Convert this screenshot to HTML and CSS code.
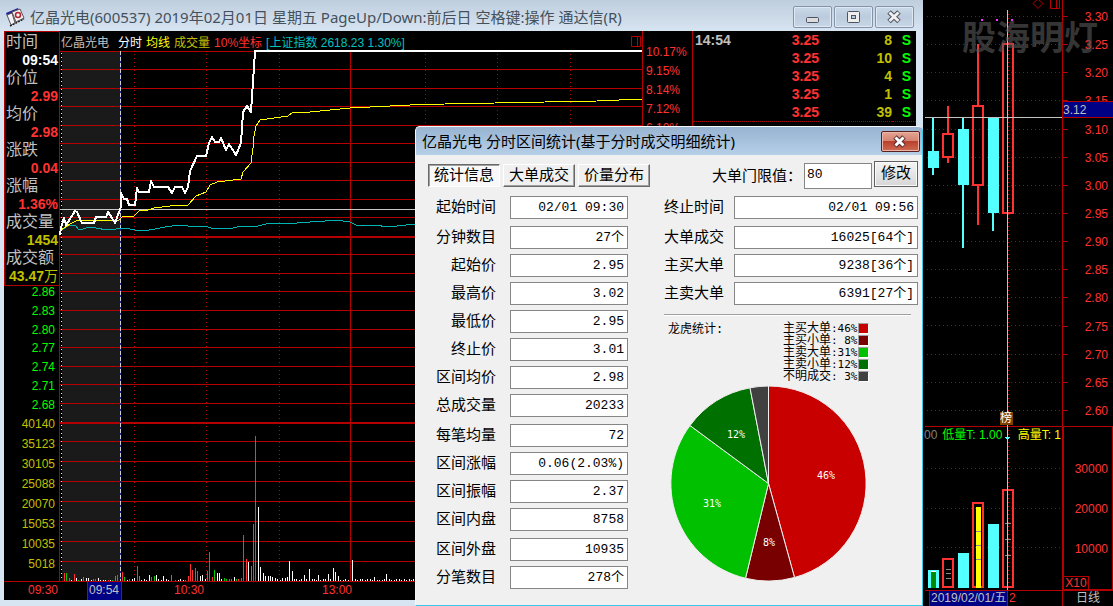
FILE: index.html
```html
<!DOCTYPE html>
<html lang="zh-CN">
<head>
<meta charset="utf-8">
<title>亿晶光电(600537)</title>
<link rel="stylesheet" href="styles.css">
</head>
<body>
<div class="desktop">
  <main class="window">
    <header class="window-title">
      <svg class="app-icon" width="20" height="20" viewBox="0 0 20 20">
        <path d="M1 6L13 1L14 4L2 9Z" fill="#20209a"/>
        <path d="M2 8L7 6L10 16L6 18Z" fill="#f4f4f8" stroke="#555" stroke-width="1"/>
        <path d="M7 5L15 2L19 11L11 15Z" fill="#f8f4f4" stroke="#555" stroke-width="1"/>
        <circle cx="13" cy="8" r="2.5" fill="none" stroke="#b02838" stroke-width="1.6"/>
        <path d="M5 19L11 16L19 12" stroke="#222" stroke-width="1.4" stroke-dasharray="2 1" fill="none"/>
      </svg>
      <h1>亿晶光电(600537) 2019年02月01日 星期五 PageUp/Down:前后日 空格键:操作 通达信(R)</h1>
      <div class="window-buttons">
        <button type="button" aria-label="最小化"><svg width="38" height="21" viewBox="0 0 38 21"><rect x="13.500" y="11.500" width="12" height="5" rx="1" fill="#dcdcdc" stroke="#4d5360"/></svg></button>
        <button type="button" aria-label="最大化"><svg width="38" height="21" viewBox="0 0 38 21"><rect x="13.500" y="5.500" width="12" height="11" rx="1" fill="#eee" stroke="#4d5360"/><rect x="17.500" y="9.500" width="4" height="3" fill="#b9cbe0" stroke="#4d5360"/></svg></button>
        <button type="button" aria-label="关闭"><svg width="38" height="21" viewBox="0 0 38 21"><path d="M14 6L24 15.500M24 6L14 15.500" stroke="#4d5360" stroke-width="5"/><path d="M14.500 6.500L23.500 15M23.500 6.500L14.500 15" stroke="#f0f0f0" stroke-width="3"/></svg></button>
      </div>
    </header>

    <div class="workspace">
      <section class="readings">
        <dl class="quote">
          <dt>时间</dt><dd class="white">09:54</dd>
          <dt>价位</dt><dd class="red">2.99</dd>
          <dt>均价</dt><dd class="red">2.98</dd>
          <dt>涨跌</dt><dd class="red">0.04</dd>
          <dt>涨幅</dt><dd class="red">1.36%</dd>
          <dt>成交量</dt><dd class="olive">1454</dd>
          <dt>成交额</dt><dd class="olive">43.47<span class="unit">万</span></dd>
        </dl>
        <div class="price-scale">
          <span>2.86</span><span>2.83</span><span>2.80</span><span>2.77</span><span>2.74</span><span>2.71</span><span>2.68</span>
        </div>
        <div class="volume-scale">
          <span>40140</span><span>35123</span><span>30105</span><span>25088</span><span>20070</span><span>15053</span><span>10035</span><span>5018</span>
        </div>
      </section>

      <section class="intraday">
        <div class="legend-row">
          <span class="gray wide">亿晶光电</span><span class="white">分时</span><span class="yellow">均线</span><span class="olive">成交量</span><span class="red">10%坐标</span><span class="teal">[上证指数 2618.23 1.30%]</span>
          <svg class="split-icon" width="10" height="11" viewBox="0 0 10 11"><path d="M.5.5H9.500V10.500H.5ZM6.500.5V10.500" fill="none" stroke="#b40000"/></svg>
        </div>
        <svg class="chart" viewBox="60 51 582 530" preserveAspectRatio="none" shape-rendering="crispEdges" fill="none">
          <rect x="62" y="51" width="58" height="530" fill="#1a1a1a"/>
          <g stroke="#b40000">
            <path d="M60 69.500H642M60 88.500H642M60 106.500H642M60 125.500H642M60 143.500H642M60 162.500H642M60 180.500H642M60 199.500H642M60 217.500H642M60 254.500H642M60 273.500H642M60 291.500H642M60 310.500H642M60 329.500H642M60 347.500H642M60 366.500H642M60 384.500H642M60 403.500H642M60 441.500H642M60 461.500H642M60 481.500H642M60 501.500H642M60 521.500H642M60 541.500H642M60 561.500H642M60 51.500H255M350.500 51V581"/>
            <path d="M60 237H642M60 423H642" stroke-width="2"/>
            <path d="M134.500 54V581M206.500 54V581M279.500 54V581M425.500 54V581M497.500 54V581M570.500 54V581" stroke-dasharray="1 3"/>
          </g>
          <path d="M61.500 53V581" stroke="#ffff40" stroke-dasharray="1 3"/>
          <path d="M120.500 51V581" stroke="#2a2a90"/>
          <path d="M120.500 51V581" stroke="#d0d0d0" stroke-dasharray="4 2"/>
          <path d="M60 209.500H642" stroke="#c8c8c8"/>
          <path class="bars-red" d="M64.500 581v-8M69.500 581v-3M74.500 581v-7M95.500 581v-2M108.500 581v-1M117.500 581v-6M122.500 581v-9M137.500 581v-15M151.500 581v-4M175.500 581v-1M188.500 581v-5M190.500 581v-17M192.500 581v-11M195.500 581v-13M197.500 581v-10M207.500 581v-10M209.500 581v-29M212.500 581v-4M229.500 581v-2M238.500 581v-2M241.500 581v-3M243.500 581v-46M246.500 581v-22M253.500 581v-57M255.500 581V436"/>
          <path class="bars-green" d="M66.500 581v-8M78.500 581v-1M83.500 581v-4M93.500 581v-2M112.500 581v-1M115.500 581v-5M124.500 581v-4M129.500 581v-2M139.500 581v-5M154.500 581v-5M171.500 581v-6M185.500 581v-1M214.500 581v-11M224.500 581v-3M226.500 581v-2M231.500 581v-2M236.500 581v-2M251.500 581v-15"/>
          <path class="bars-white" d="M71.500 581v-1M76.500 581v-3M81.500 581v-2M86.500 581v-3M88.500 581v-3M91.500 581v-1M98.500 581v-3M100.500 581v-1M103.500 581v-1M105.500 581v-1M110.500 581v-1M127.500 581v-1M132.500 581v-2M134.500 581v-3M141.500 581v-1M144.500 581v-2M146.500 581v-1M149.500 581v-6M156.500 581v-6M158.500 581v-2M161.500 581v-1M163.500 581v-5M166.500 581v-2M168.500 581v-1M178.500 581v-1M180.500 581v-2M183.500 581v-1M200.500 581v-5M202.500 581v-6M205.500 581v-2M217.500 581v-8M219.500 581v-8M221.500 581v-2M234.500 581v-4M248.500 581v-19M258.500 581v-74M260.500 581v-14M263.500 581v-8M265.500 581v-5M268.500 581v-5M270.500 581v-5M272.500 581v-4M275.500 581v-3M277.500 581v-2M280.500 581v-1M282.500 581v-3M285.500 581v-3M287.500 581v-4M289.500 581v-20M292.500 581v-10M294.500 581v-2M296.500 581v-2M299.500 581v-1M301.500 581v-2M304.500 581v-6M306.500 581v-2M309.500 581v-12M312.500 581v-2M314.500 581v-2M316.500 581v-1M318.500 581v-6M320.500 581v-1M323.500 581v-2M325.500 581v-2M328.500 581v-7M330.500 581v-2M333.500 581v-13M335.500 581v-9M338.500 581v-5M340.500 581v-1M343.500 581v-1M345.500 581v-2M348.500 581v-1M352.500 581v-21M355.500 581v-2M357.500 581v-1M360.500 581v-2M362.500 581v-2M365.500 581v-1M367.500 581v-2M370.500 581v-2M372.500 581v-1M374.500 581v-4M377.500 581v-1M379.500 581v-1M382.500 581v-1M384.500 581v-2M386.500 581v-7M389.500 581v-2M391.500 581v-1M394.500 581v-1M396.500 581v-2M399.500 581v-2M401.500 581v-1M404.500 581v-2M406.500 581v-1M409.500 581v-2M411.500 581v-1M413.500 581v-2"/>
          <path d="M61 230L70 225H75L79 230L90 227L96 228L107 230L125 228L135 230L144 231L155 229L165 227L180 225L195 227L206 226L213 229L233 228L237 227L258 226L270 223L285 224L310 222L325 221L335 220L350 222L356 225L375 225L388 227L415 224" stroke="#00b4b4"/>
          <path d="M61 230L70 224L76 221L119 220L122 217L134 216L139 211L148 210L154 208L170 206L188 205L196 196L206 192L210 185L217 182L241 179L243 172L251 163L253 148L254 136L256 126L260 120L288 116L292 113L310 112L350 108L410 105L445 104L545 102L597 101L642 99" stroke="#ffff00"/>
          <path d="M60 235L61 228L64 218L66 225L70 219L75 211L77 212L82 223H94L96 217H106L108 212L112 218L115 223L119 212L121 207V193L124 199H127L129 205H135L137 188L139 192H149L151 181L154 187H168L172 193L175 187H182L185 193L188 187L190 171L197 156H206L209 143L212 137L215 142H219L221 138L226 150L229 144L236 155L241 143L243 112L247 106L251 112L253 82L255 51H642" stroke="#fff" stroke-width="2" stroke-linejoin="round"/>
        </svg>
      </section>

      <section class="percent-scale">
        <span>10.17%</span><span>9.15%</span><span>8.14%</span><span>7.12%</span><span>6.10%</span>
      </section>

      <section class="trades">
        <table>
          <tr><td class="time">14:54</td><td class="price">3.25</td><td class="lots">8</td><td class="side">S</td></tr>
          <tr><td class="time"></td><td class="price">3.25</td><td class="lots">10</td><td class="side">S</td></tr>
          <tr><td class="time"></td><td class="price">3.25</td><td class="lots">4</td><td class="side">S</td></tr>
          <tr><td class="time"></td><td class="price">3.25</td><td class="lots">1</td><td class="side">S</td></tr>
          <tr><td class="time"></td><td class="price">3.25</td><td class="lots">39</td><td class="side">S</td></tr>
        </table>
      </section>

      <footer class="time-axis">
        <span class="tick-open">09:30</span><span class="tick-cursor">09:54</span><span class="tick-mid">10:30</span><span class="tick-noon">13:00</span>
      </footer>
    </div>
  </main>

  <aside class="daily">
    <svg class="daily-chart" viewBox="925 0 137 590" preserveAspectRatio="none" shape-rendering="crispEdges" fill="none">
      <path d="M927 16.500H1062M927 44.500H1062M927 72.500H1062M927 100.500H1062M927 129.500H1062M927 157.500H1062M927 185.500H1062M927 213.500H1062M927 241.500H1062M927 269.500H1062M927 297.500H1062M927 325.500H1062M927 354.500H1062M927 382.500H1062M927 410.500H1062M927 468.500H1062M927 508.500H1062M927 547.500H1062M1008.500 14V588" stroke="#b40000" stroke-dasharray="1 3"/>
      <path d="M925 426.500H1062" stroke="#b40000"/>
      <path d="M933 118V175M963 118V248M993 118V231" stroke="#54ffff" stroke-width="2"/>
      <path d="M928 151H939V168H928ZM958 129H969V185H958ZM988 118H999V213H988ZM928 570H939V588H928ZM958 553H969V588H958ZM988 524H999V588H988Z" fill="#54ffff"/>
      <path d="M948 106V133M948 158V163M978 44V105M978 186V225M943 134H953V157H943ZM973 106H983V185H973ZM1003 44H1013V213H1003ZM943 559H953V587H943ZM973 503H983V587H973ZM1003 490H1013V587H1003Z" stroke="#ff3232" stroke-width="2"/>
      <path d="M931 571H936V588H931Z" fill="#008800"/>
      <path d="M931 571.500H936" stroke="#fff"/>
      <path d="M976 507H981V588H976Z" fill="#ffff00"/>
      <path d="M946 569.500H951M946 573.500H951M946 578.500H951M976 531.500H981M976 545.500H981M976 559.500H981M1005 523.500H1011M1005 539.500H1011M1005 555.500H1011" stroke="#888"/>
      <path d="M981 19h2v2h-2ZM996 19h2v2h-2ZM1011 19h2v2h-2Z" fill="#ff30ff"/>
      <path d="M925 117.500H1062M1007.500 10V590" stroke="#c4c4c4"/>
      <path d="M1007.500 428V440" stroke="#54ffff"/><path d="M1005 437H1010L1007.500 441Z" fill="#54ffff"/>
    </svg>
    <div class="daily-scale">
      <span>3.30</span><span>3.25</span><span>3.20</span><span>3.15</span><span>3.10</span><span>3.05</span><span>3.00</span><span>2.95</span><span>2.90</span><span>2.85</span><span>2.80</span><span>2.75</span><span>2.70</span><span>2.65</span><span>2.60</span>
      <b class="cursor-price">3.12</b>
    </div>
    <div class="daily-volume-scale"><span>30000</span><span>20000</span><span>10000</span><i>X10</i></div>
    <div class="daily-footer"><span class="cursor-date">2019/02/01/五</span><span class="month">2</span><span class="period">日线</span></div>
    <svg class="corner-icons" width="30" height="10" viewBox="0 0 30 10" fill="none" stroke="#b40000"><path d="M6-1L11 3.500L6 8.500L1 3.500ZM18.500-1V8.500H27.500V-1M24.500-1V8.500"/></svg>
    <div class="indicator"><span class="dim">00</span><span class="green">低量T: 1.00</span><span class="yellow">高量T: 1</span></div>
    <span class="badge">榜</span>
    <span class="watermark">股海明灯</span>
  </aside>

  <section class="dialog" role="dialog" aria-labelledby="dialog-title">
    <header class="dialog-title">
      <h2 id="dialog-title">亿晶光电 分时区间统计(基于分时成交明细统计)</h2>
      <button type="button" class="dialog-close" aria-label="关闭"><svg width="37" height="19" viewBox="0 0 37 19"><path d="M14 5L23 14M23 5L14 14" stroke="#5a2a2a" stroke-width="5"/><path d="M14.500 5.500L22.500 13.500M22.500 5.500L14.500 13.500" stroke="#fff" stroke-width="3"/></svg></button>
    </header>
    <div class="dialog-body">
      <div class="column-left">
        <nav class="tabs">
          <button type="button" class="tab active">统计信息</button><button type="button" class="tab">大单成交</button><button type="button" class="tab">价量分布</button>
        </nav>
        <div class="fields">
          <label class="field"><span>起始时间</span><input readonly value="02/01 09:30"></label>
          <label class="field group"><span>分钟数目</span><input readonly value="27个"></label>
          <label class="field"><span>起始价</span><input readonly value="2.95"></label>
          <label class="field"><span>最高价</span><input readonly value="3.02"></label>
          <label class="field"><span>最低价</span><input readonly value="2.95"></label>
          <label class="field"><span>终止价</span><input readonly value="3.01"></label>
          <label class="field"><span>区间均价</span><input readonly value="2.98"></label>
          <label class="field"><span>总成交量</span><input readonly value="20233"></label>
          <label class="field group"><span>每笔均量</span><input readonly value="72"></label>
          <label class="field"><span>区间涨幅</span><input readonly value="0.06(2.03%)"></label>
          <label class="field"><span>区间振幅</span><input readonly value="2.37"></label>
          <label class="field"><span>区间内盘</span><input readonly value="8758"></label>
          <label class="field group"><span>区间外盘</span><input readonly value="10935"></label>
          <label class="field"><span>分笔数目</span><input readonly value="278个"></label>
        </div>
      </div>
      <div class="column-right">
        <div class="threshold">
          <label for="limit">大单门限值：</label><input id="limit" value="80"><button type="button">修改</button>
        </div>
        <div class="fields">
          <label class="field"><span>终止时间</span><input readonly value="02/01 09:56"></label>
          <label class="field group"><span>大单成交</span><input readonly value="16025[64个]"></label>
          <label class="field"><span>主买大单</span><input readonly value="9238[36个]"></label>
          <label class="field"><span>主卖大单</span><input readonly value="6391[27个]"></label>
        </div>
        <hr>
        <div class="summary">
          <span>龙虎统计:</span>
          <ul class="pie-legend">
            <li><span>主买大单</span><em>:46%</em><i class="c1"></i></li>
            <li><span>主买小单</span><em>: 8%</em><i class="c2"></i></li>
            <li><span>主卖大单</span><em>:31%</em><i class="c3"></i></li>
            <li><span>主卖小单</span><em>:12%</em><i class="c4"></i></li>
            <li><span>不明成交</span><em>: 3%</em><i class="c5"></i></li>
          </ul>
        </div>
        <svg class="pie" width="196" height="196" viewBox="671 386 196 196">
          <g stroke="#f0f0f0" stroke-width="1">
            <path d="M769.500 483.500V386A97.500 97.500 0 0 1 795.500 577.500Z" fill="#c80000"/>
            <path d="M769.500 483.500L795.500 577.500A97.500 97.500 0 0 1 746.500 578.300Z" fill="#780000"/>
            <path d="M769.500 483.500L746.500 578.300A97.500 97.500 0 0 1 691 425.500Z" fill="#00c000"/>
            <path d="M769.500 483.500L691 425.500A97.500 97.500 0 0 1 751 387.800Z" fill="#007000"/>
            <path d="M769.500 483.500L751 387.800A97.500 97.500 0 0 1 769.500 386Z" fill="#404040"/>
          </g>
          <g class="pie-text"><text x="827" y="479">46%</text><text x="770" y="546">8%</text><text x="713" y="507">31%</text><text x="737" y="438">12%</text></g>
        </svg>
      </div>
    </div>
  </section>
</div>
</body>
</html>
```

FILE: styles.css
```css
* { box-sizing: border-box; }

body {
  margin: 0;
  background: #000;
  font: 12px "Liberation Sans", "Noto Sans CJK SC", sans-serif;
}

h1, h2, dl, dd, ul { margin: 0; padding: 0; }
button, input { font: inherit; color: inherit; padding: 0; margin: 0; border-radius: 0; }

.white { color: #fff; }
.gray { color: #c0c0c0; }
.red { color: #ff3232; }
.olive { color: #c0c000; }
.yellow { color: #ff0; }
.teal { color: #00c0c0; }
.green { color: #0f0; }
.dim { color: #808080; }

.desktop {
  position: relative;
  display: grid;
  grid-template-columns: 1fr 190px;
  overflow: hidden;
}

/* Main window */
.window {
  min-width: 0;
  padding: 0 7px 7px 4px;
  background: #d7e4f2;
}

.window-title {
  display: flex;
  align-items: center;
  height: 31px;
  margin: 0 -7px 0 -4px;
  padding: 2px 9px 0 5px;
  background: linear-gradient(#bfcedd, #d7e4f2);
}

.app-icon { margin-right: 5px; flex: none; }

.window-title h1 {
  flex: 1;
  font: 15px/24px "Noto Sans", "Noto Sans CJK SC", sans-serif;
  color: #44515d;
  white-space: nowrap;
}

.window-buttons { display: flex; gap: 2px; }

.window-buttons button {
  width: 39px;
  height: 22px;
  border: 1px solid #8493a8;
  border-radius: 2px;
  background: linear-gradient(#cbd9e8, #bccbdd 50%, #c9d8e8);
  box-shadow: inset 0 0 0 1px #dfe9f3;
}

.window-buttons svg, .dialog-close svg { display: block; margin: -1px; }

.workspace {
  display: grid;
  grid-template-columns: 56px 1fr 50px 224px;
  grid-template-rows: auto 18px;
  background: #000;
}

.readings {
  border-right: 1px solid #b40000;
  line-height: 18px;
  text-align: right;
}

.quote {
  margin-right: -1px;
  padding-top: 1px;
  border: 1px solid #b40000;
  font-size: 14px;
  font-weight: bold;
}

.quote dt {
  padding-left: 1px;
  font-size: 16px;
  font-weight: normal;
  text-align: left;
  color: #c0c0c0;
}

.quote dd { padding-right: 1px; white-space: nowrap; }
.unit { font-weight: normal; }

.price-scale, .volume-scale {
  display: flex;
  flex-direction: column;
  padding-right: 4px;
}

.price-scale {
  height: 131px;
  margin-top: -3px;
  justify-content: space-around;
  color: #0f0;
}

.volume-scale { color: #c0c000; line-height: 20px; }

.intraday {
  min-width: 0;
  border-bottom: 1px solid #b40000;
}

.legend-row {
  display: flex;
  align-items: center;
  gap: 4px;
  height: 20px;
  padding: 0 1px;
  white-space: nowrap;
}

.wide { margin-right: 5px; }
.split-icon { margin-left: auto; flex: none; }

.chart {
  display: block;
  width: 100%;
  height: 530px;
  overflow: visible;
}

.bars-red { stroke: #ff3232; }
.bars-green { stroke: #0c0; }
.bars-white { stroke: #fff; }

.percent-scale {
  display: flex;
  flex-direction: column;
  padding: 12px 0 0 3px;
  gap: 1px;
  border-left: 1px solid #b40000;
  line-height: 18px;
  color: #ff3232;
}

.trades { border-left: 1px solid #b40000; }

.trades table {
  width: 100%;
  border-collapse: collapse;
  border-bottom: 1px dotted #b40000;
  font-size: 14px;
  font-weight: bold;
  line-height: 18px;
}

.trades td { padding: 0; height: 18px; }
.trades .time { width: 60px; padding-left: 2px; color: #c0c0c0; }
.trades .price { text-align: right; color: #ff3232; width: 66px; }
.trades .lots { text-align: right; color: #c0c000; }
.trades .side { width: 24px; padding-right: 5px; text-align: right; color: #0f0; }

.time-axis {
  grid-column: 1 / -1;
  display: flex;
  padding-left: 24px;
  border-top: 1px solid #b40000;
  margin-top: -1px;
  line-height: 17px;
  color: #ff3232;
}

.time-axis span { width: 35px; }

.time-axis .tick-cursor {
  margin-left: 24px;
  padding-left: 1px;
  border: 1px solid #b40000;
  border-width: 0 1px;
  background: #000084;
  color: #c0c0c0;
}

.tick-mid { margin-left: 52px; }
.tick-noon { margin-left: 113px; }

/* Daily panel */
.daily {
  position: relative;
  display: grid;
  grid-template-columns: 1fr 51px;
  grid-template-rows: 426px 164px 16px;
  padding-left: 2px;
  background: #000;
  color: #ff3232;
}

.daily-chart { grid-row: 1 / 3; width: 100%; height: 590px; }

.daily-scale {
  position: relative;
  display: flex;
  flex-direction: column;
  justify-content: space-between;
  padding: 9px 5px 7px 0;
  border-left: 1px solid #b40000;
  line-height: 16px;
  text-align: right;
}

.daily-scale span { position: relative; }

.daily-scale span::before {
  content: "";
  position: absolute;
  left: 0;
  top: 7px;
  width: 5px;
  height: 1px;
  background: #b40000;
}

.cursor-price {
  position: absolute;
  left: 0;
  right: 0;
  top: 101px;
  height: 17px;
  border: 1px solid #b40000;
  border-width: 1px 0;
  background: #000084;
  color: #c0c0c0;
  font-weight: normal;
  text-align: left;
}

.daily-volume-scale {
  display: flex;
  flex-direction: column;
  gap: 24px;
  padding: 34px 4px 0 0;
  border: 1px solid #b40000;
  border-left-width: 2px;
  line-height: 16px;
  text-align: right;
}

.daily-volume-scale i {
  width: 25px;
  margin-top: -5px;
  border: 1px solid #b40000;
  border-left: 0;
  line-height: 13px;
  font-style: normal;
  text-align: center;
}

.daily-footer {
  grid-column: 1 / -1;
  display: flex;
  padding-left: 4px;
  border-top: 1px solid #b40000;
  line-height: 15px;
}

.cursor-date {
  width: 79px;
  padding-left: 1px;
  border: 1px solid #b40000;
  border-width: 0 1px;
  background: #000084;
  color: #c0c0c0;
  white-space: nowrap;
}

.month { flex: 1; padding-left: 1px; }

.period {
  width: 51px;
  border-left: 1px solid #b40000;
  color: #c0c0c0;
  text-align: center;
}

.corner-icons { position: absolute; right: 51px; top: 0; }

.indicator {
  position: absolute;
  left: 1px;
  top: 427px;
  width: 137px;
  display: flex;
  gap: 5px;
  line-height: 16px;
  white-space: nowrap;
  overflow: hidden;
}

.indicator .yellow { margin-left: auto; }

.badge {
  position: absolute;
  left: 77px;
  top: 412px;
  width: 13px;
  height: 13px;
  background: #804000;
  color: #fff;
  line-height: 13px;
}

.watermark {
  position: absolute;
  left: 39px;
  top: 12px;
  font: bold 34px/48px "Noto Sans CJK SC", sans-serif;
  color: rgba(90, 90, 90, .6);
  white-space: nowrap;
}

/* Statistics dialog */
.dialog {
  position: absolute;
  top: 126px;
  right: 190px;
  bottom: 1px;
  width: 508px;
  border: 1px solid #f4f8fc;
  border-right-color: #38c8e8;
  border-bottom-color: #38c8e8;
  border-radius: 5px 5px 0 0;
  background: #f0f0f0;
  color: #000;
  font: 15px/26px "Liberation Mono", "Noto Sans CJK SC", monospace;
}

.dialog-title {
  display: flex;
  justify-content: space-between;
  align-items: center;
  height: 28px;
  padding: 0 2px 0 6px;
  border-radius: 4px 4px 0 0;
  background: linear-gradient(#98b4d1, #b7cfe8);
}

.dialog-title h2 {
  font: 15px/26px "Noto Sans", "Noto Sans CJK SC", sans-serif;
  white-space: nowrap;
}

.dialog-close {
  width: 39px;
  height: 21px;
  border: 1px solid #5c1f1f;
  border-radius: 2px;
  background: linear-gradient(#e6a493, #d48371 48%, #b9402c 50%, #d06a52);
  box-shadow: inset 0 0 0 1px #eab5a8;
}

.dialog-body {
  display: flex;
  justify-content: space-between;
  padding: 6px 4px 0 12px;
}

.column-left { width: 222px; }
.column-right { width: 254px; }

.tabs {
  display: flex;
  gap: 3px;
  height: 35px;
  padding-top: 3px;
}

.tab {
  flex: none;
  width: 72px;
  height: 23px;
  border: 1px solid;
  border-color: #fff #696969 #696969 #fff;
  box-shadow: inset -1px -1px #a0a0a0;
  background: #f0f0f0;
  line-height: 23px;
}

.tab.active {
  border-color: #696969 #fff #fff #696969;
  box-shadow: inset 1px 1px #a0a0a0;
  background: #f8f8f8;
}

.fields { display: flex; flex-direction: column; gap: 5px; }

.field {
  display: grid;
  grid-template-columns: 68px 1fr;
  column-gap: 14px;
  height: 23px;
  text-align: right;
}

.column-left .field { width: 200px; }
.column-right .field { grid-template-columns: 60px 1fr; column-gap: 10px; }
.group { margin-top: 2px; }

.field input, .threshold input {
  width: 100%;
  height: 23px;
  min-width: 0;
  border: 1px solid #868686;
  background: #fff;
  font-size: 13px;
}

.field input { padding-right: 3px; text-align: right; }

.threshold {
  display: flex;
  justify-content: flex-end;
  gap: 2px;
  height: 35px;
}

.threshold label { line-height: 34px; }
.threshold input { width: 68px; height: 26px; margin-top: 2px; padding: 0 2px 3px; }

.threshold button {
  width: 44px;
  height: 26px;
  border: 1px solid #606060;
  background: linear-gradient(#f4f4f4, #d6d6d6);
  box-shadow: inset 0 0 0 1px #fafafa;
}

.column-right hr {
  height: 2px;
  margin: 9px 7px 0 0;
  border: 0;
  border-top: 1px solid #a0a0a0;
  border-bottom: 1px solid #fff;
}

.summary {
  display: flex;
  justify-content: space-between;
  padding: 7px 49px 0 4px;
  font-size: 12px;
  line-height: 14px;
}

.pie-legend { list-style: none; line-height: 12px; }
.pie-legend li { display: flex; height: 12px; }

.pie-legend em {
  width: 27px;
  font: 11px/12px "DejaVu Sans Mono", monospace;
  white-space: pre;
}

.pie-legend i {
  width: 11px;
  height: 11px;
  border: 1px solid;
  border-color: #a0a0a0 #fff #fff #a0a0a0;
}

.c1 { background: #c80000; }
.c2 { background: #780000; }
.c3 { background: #00c000; }
.c4 { background: #007000; }
.c5 { background: #404040; }

.pie { display: block; margin: 3px 0 0 6px; }
.pie-text { font: 10px "DejaVu Sans Mono", monospace; fill: #fff; text-anchor: middle; }
```
